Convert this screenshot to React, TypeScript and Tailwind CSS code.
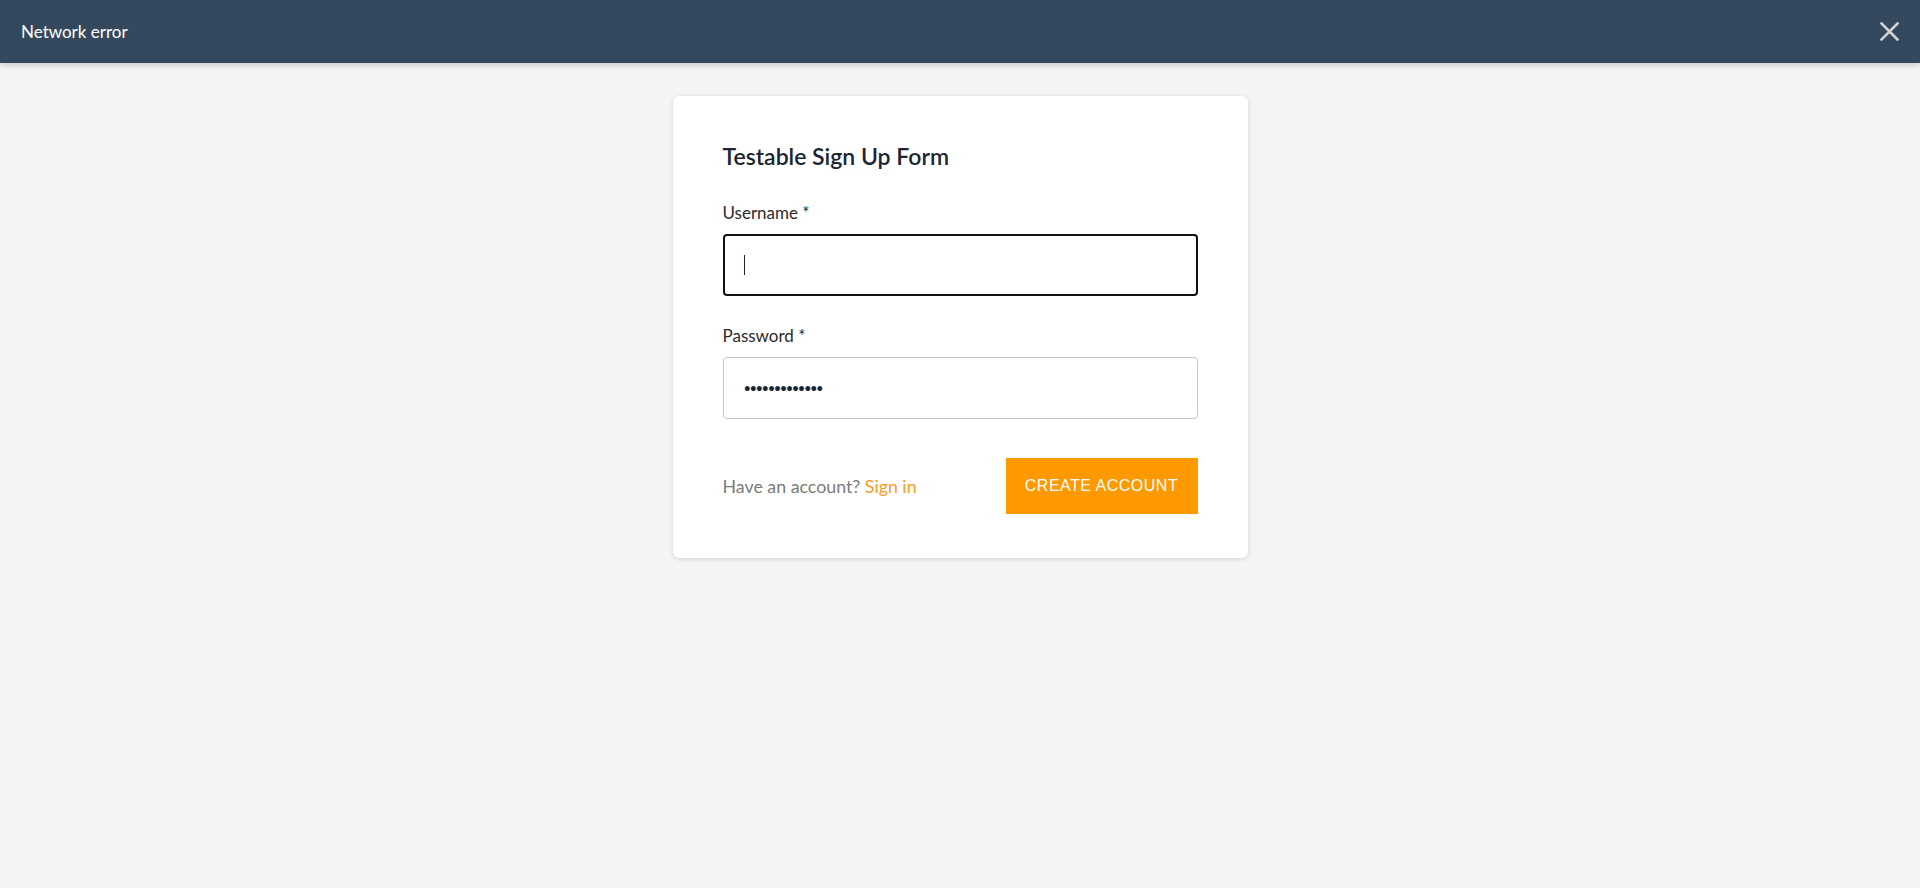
import React from "react";

export default function App() {
  return (
    <div className="min-h-[888px] bg-[#f4f4f4] font-['Lato','Noto_Sans',sans-serif]">
      <header className="relative z-10 flex h-[63px] items-center justify-between bg-[#34495e] pl-[21px] pr-[21px] shadow-[0_2px_6px_rgba(0,0,0,0.18)]">
        <span className="text-[17px] leading-[24px] text-white">Network error</span>
        <button aria-label="Close" className="flex h-[19px] w-[19px] items-center justify-center">
          <svg width="19" height="19" viewBox="0 0 19 19" fill="none">
            <path d="M1.5 1.5 L17.5 17.5 M17.5 1.5 L1.5 17.5" stroke="#cfd3d8" strokeWidth="2.6" strokeLinecap="square" />
          </svg>
        </button>
      </header>

      <main className="flex justify-center pt-[33px]">
        <div className="w-[575px] rounded-[6px] bg-white px-[50px] pb-[44px] pt-[46px] shadow-[0_1px_4px_rgba(0,0,0,0.14)]">
          <h1 className="text-[23px] font-semibold leading-[28px] text-[#1b2533]">Testable Sign Up Form</h1>

          <label className="mt-[31px] block text-[17px] leading-[24px] text-[#2b2b2b]">Username *</label>
          <div className="mt-[9px] flex h-[62px] items-center rounded-[4px] border-2 border-[#111111] pl-[19px]">
            <span className="h-[20px] w-[1px] bg-[#1b2533]" />
          </div>

          <label className="mt-[28px] block text-[17px] leading-[24px] text-[#2b2b2b]">Password *</label>
          <div className="mt-[9px] flex h-[62px] items-center rounded-[4px] border border-[#c4c4c4] pl-[20px]">
            <span className="text-[13px] leading-[20px] tracking-[-1.5px] text-[#1b2533]">•••••••••••••</span>
          </div>

          <div className="mt-[39px] flex items-center justify-between">
            <p className="text-[17.8px] leading-[24px] text-[#7b7b7b]">
              Have an account? <a className="text-[#ff9a1f]">Sign in</a>
            </p>
            <button className="h-[56px] w-[192px] bg-[#ff9900] font-['Liberation_Sans',Arial,sans-serif] text-[16px] tracking-[0.5px] text-white">
              CREATE ACCOUNT
            </button>
          </div>
        </div>
      </main>
    </div>
  );
}
